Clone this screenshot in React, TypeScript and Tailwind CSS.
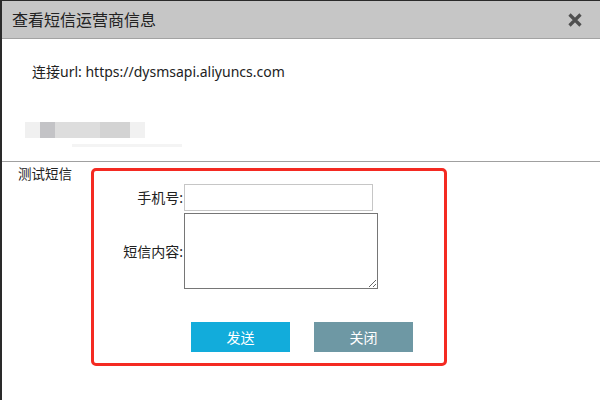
import React from 'react';

const font = { fontFamily: '"Noto Sans", "Noto Sans CJK SC", sans-serif' };

export default function App() {
  return (
    <div
      className="flex h-[400px] w-[600px] flex-col overflow-hidden border-l-2 border-t border-[#2a2a2a] bg-white text-[#222]"
      style={font}
    >
      {/* title bar */}
      <div className="flex h-[38px] shrink-0 items-center justify-between border-b border-[#a3a3a3] bg-[#c6c6c6] pl-[10px] pr-[17px]">
        <span className="text-[16px] leading-5 text-[#222]">查看短信运营商信息</span>
        <svg width="16" height="16" viewBox="0 0 16 16" className="text-[#4f4f4f]">
          <path d="M2.5 2.5 L13.5 13.5 M13.5 2.5 L2.5 13.5" stroke="currentColor" strokeWidth="3.2" strokeLinecap="butt" />
        </svg>
      </div>

      {/* provider info */}
      <div className="h-[123px] shrink-0 border-b border-[#a0a0a0] pl-[30px] pt-[23px]">
        <p className="text-[14px] leading-5">连接url: https://dysmsapi.aliyuncs.com</p>
        <div className="ml-[-7px] mt-[40px] flex h-[16px] w-[120px] opacity-90">
          <div className="w-[15px] bg-[#efefef]" />
          <div className="w-[15px] bg-[#bdbdc0]" />
          <div className="w-[45px] bg-[#dadada]" />
          <div className="w-[30px] bg-[#cfcfcf]" />
          <div className="w-[15px] bg-[#f0f0f0]" />
        </div>
        <div className="ml-[40px] mt-[6px] h-[3px] w-[110px] bg-[#f4f4f4]" />
      </div>

      {/* test sms */}
      <div className="flex items-start pl-[16px]">
        <span className="w-[73px] shrink-0 pt-[2px] text-[13.5px] leading-5 text-[#222]">测试短信</span>
        <div className="mt-[6px] h-[198px] w-[356px] rounded-[5px] border-[3px] border-[#f42a22] pt-[13px]">
          <div className="flex items-center">
            <label className="w-[90px] pr-[1px] text-right text-[14px]">手机号:</label>
            <input className="h-[27px] w-[189px] border border-[#c6c6c6] bg-white outline-none" />
          </div>
          <div className="mt-[2px] flex items-center">
            <label className="w-[90px] pr-[1px] text-right text-[14px]">短信内容:</label>
            <textarea className="h-[76px] w-[194px] border border-[#767676] bg-white outline-none" />
          </div>
          <div className="ml-[97px] mt-[33px] flex gap-[24px]">
            <button className="h-[30px] w-[99px] bg-[#12acdb] text-[14px] text-white">发送</button>
            <button className="h-[30px] w-[99px] bg-[#6e98a4] text-[14px] text-white">关闭</button>
          </div>
        </div>
      </div>
    </div>
  );
}
